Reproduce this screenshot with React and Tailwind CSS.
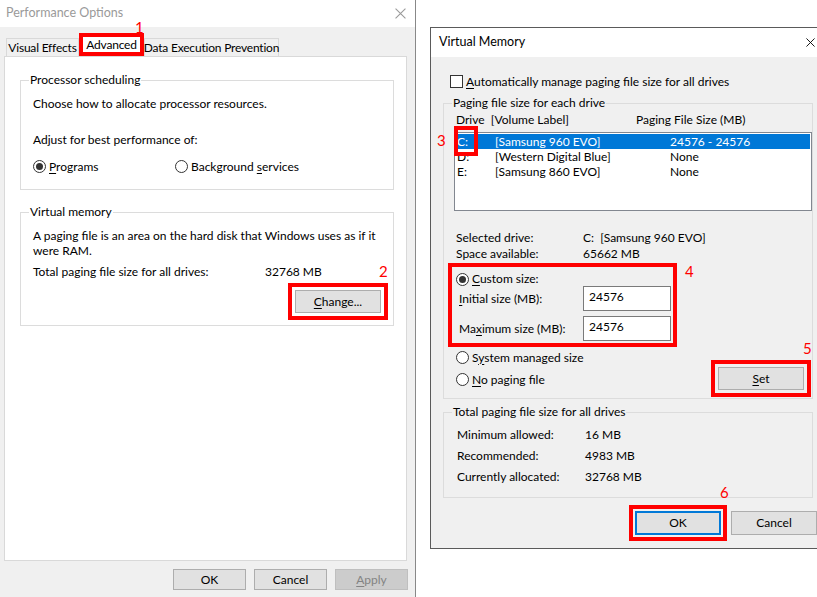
import React from 'react'

const U = ({ children }) => <span className="underline underline-offset-[2px]">{children}</span>

function Radio({ checked }) {
  return (
    <span className="flex h-[13px] w-[13px] shrink-0 items-center justify-center rounded-full border border-[#333] bg-white">
      {checked && <span className="h-[7px] w-[7px] rounded-full bg-[#333]" />}
    </span>
  )
}

function RedBox() {
  return <span className="pointer-events-none absolute -inset-[8px] border-4 border-[#ff0000]" />
}

function Mark({ n, className }) {
  return <span className={`absolute text-[15px] leading-[15px] text-[#ff0000] ${className}`}>{n}</span>
}

function Group({ title, bg, className, children }) {
  return (
    <div className={`relative border border-[#dcdcdc] ${className}`}>
      <span className={`absolute -top-[9px] left-[8px] px-[1px] leading-[16px] ${bg}`}>{title}</span>
      {children}
    </div>
  )
}

function CloseX({ color, size }) {
  return (
    <svg width={size} height={size} viewBox="0 0 10 10" className="shrink-0">
      <path d="M0.5 0.5 L9.5 9.5 M9.5 0.5 L0.5 9.5" stroke={color} strokeWidth="1" fill="none" />
    </svg>
  )
}

function PerformanceOptions() {
  return (
    <div className="flex h-full w-[416px] shrink-0 flex-col border-r border-[#888] bg-[#f0f0f0]">
      <div className="flex h-[27px] items-center justify-between bg-white pl-[6px] pr-[9px] text-[#9a9a9a]">
        <span className="text-[12.5px]">Performance Options</span>
        <CloseX color="#9a9a9a" size={11} />
      </div>

      {/* tabs */}
      <div className="flex h-[29px] items-end whitespace-nowrap pl-[6px] tracking-[-0.2px]">
        <div className="flex h-[18px] w-[73px] items-center justify-center border border-b-0 border-[#d9d9d9]">
          Visual Effects
        </div>
        <div className="relative flex h-[23px] w-[65px] items-center justify-center border-4 border-[#ff0000] bg-white">
          Advanced
          <Mark n="1" className="left-[52px] -top-[17px]" />
        </div>
        <div className="flex h-[18px] w-[135px] items-center justify-center border border-b-0 border-[#d9d9d9]">
          Data Execution Prevention
        </div>
      </div>

      <div className="ml-[4px] h-[505px] w-[403px] border border-[#d9d9d9] bg-white px-[15px] pt-[23px]">
        <Group title="Processor scheduling" bg="bg-white" className="w-[374px] pb-[15px] pl-[12px] pt-[15px]">
          <div className="leading-[15px]">Choose how to allocate processor resources.</div>
          <div className="mt-[21px] leading-[15px]">Adjust for best performance of:</div>
          <div className="mt-[12px] flex h-[15px] items-center">
            <div className="flex w-[142px] items-center gap-[3px]">
              <Radio checked />
              <span><U>P</U>rograms</span>
            </div>
            <div className="flex items-center gap-[3px]">
              <Radio />
              <span>Background <U>s</U>ervices</span>
            </div>
          </div>
        </Group>

        <Group title="Virtual memory" bg="bg-white" className="mt-[22px] w-[374px] pb-[12px] pl-[12px] pr-[12px] pt-[15px]">
          <div className="leading-[15px]">
            A paging file is an area on the hard disk that Windows uses as if it
            <br />
            were RAM.
          </div>
          <div className="mt-[6px] flex leading-[15px]">
            <span className="w-[232px]">Total paging file size for all drives:</span>
            <span>32768 MB</span>
          </div>
          <div className="mt-[11px] flex justify-end">
            <div className="relative flex h-[23px] w-[86px] items-center justify-center border border-[#adadad] bg-[#e1e1e1]">
              <span><U>C</U>hange...</span>
              <RedBox />
              <Mark n="2" className="left-[83px] -top-[27px]" />
            </div>
          </div>
        </Group>
      </div>

      <div className="mt-[8px] flex justify-end gap-[8px] pr-[7px]">
        <div className="flex h-[21px] w-[73px] items-center justify-center border border-[#adadad] bg-[#e1e1e1]">OK</div>
        <div className="flex h-[21px] w-[73px] items-center justify-center border border-[#adadad] bg-[#e1e1e1]">Cancel</div>
        <div className="flex h-[21px] w-[73px] items-center justify-center border border-[#bfbfbf] bg-[#cccccc] text-[#838383]">
          <span><U>A</U>pply</span>
        </div>
      </div>
    </div>
  )
}

const drives = [
  { d: 'C:', label: '[Samsung 960 EVO]', size: '24576 - 24576', selected: true },
  { d: 'D:', label: '[Western Digital Blue]', size: 'None' },
  { d: 'E:', label: '[Samsung 860 EVO]', size: 'None' },
]

function VirtualMemory() {
  return (
    <div className="ml-[14px] mt-[27px] flex h-[522px] w-[398px] shrink-0 flex-col border border-[#5a5a5a]">
      <div className="flex h-[29px] shrink-0 items-center justify-between bg-white pl-[8px] pr-[12px]">
        <span className="text-[12.5px]">Virtual Memory</span>
        <CloseX color="#000" size={9} />
      </div>

      <div className="flex-1 bg-[#f0f0f0] pl-[12px]">
        <div className="ml-[7px] mt-[18px] flex h-[13px] items-center gap-[3px]">
          <span className="h-[13px] w-[13px] border border-[#333] bg-white" />
          <span><U>A</U>utomatically manage paging file size for all drives</span>
        </div>

        <Group title="Paging file size for each drive" bg="bg-[#f0f0f0]" className="mt-[15px] w-[370px] pb-[8px] pl-[10px] pt-[8px]">
          <div className="ml-[2px] flex h-[16px] items-center">
            <span className="w-[180px]">Drive&nbsp; [Volume Label]</span>
            <span>Paging File Size (MB)</span>
          </div>

          <div className="relative mt-[4px] h-[79px] w-[358px] border border-[#828790] bg-white p-px">
            {drives.map((r) => (
              <div
                key={r.d}
                className={`flex h-[15px] items-center pl-[1px] ${r.selected ? 'bg-[#0078d7] text-white' : ''}`}
              >
                <span className="w-[38px]">{r.d}</span>
                <span className="w-[175px]">{r.label}</span>
                <span>{r.size}</span>
              </div>
            ))}
            <span className="pointer-events-none absolute -left-px -top-[7px] h-[30px] w-[24px] border-4 border-[#ff0000]" />
            <Mark n="3" className="-left-[18px] top-0" />
          </div>

          <div className="ml-[2px] mt-[19px] leading-[16px]">
            <div className="flex">
              <span className="w-[127px]">Selected drive:</span>
              <span>C:&nbsp; [Samsung 960 EVO]</span>
            </div>
            <div className="flex">
              <span className="w-[127px]">Space available:</span>
              <span>65662 MB</span>
            </div>
          </div>

          <div className="relative mt-[10px]">
            <div className="ml-[2px] flex h-[14px] items-center gap-[3px]">
              <Radio checked />
              <span><U>C</U>ustom size:</span>
            </div>
            <div className="flex h-[25px] items-center">
              <span className="ml-[5px] w-[124px]"><U>I</U>nitial size (MB):</span>
              <div className="flex h-[25px] w-[88px] items-center border border-[#7a7a7a] bg-white pb-[3px] pl-[5px]">24576</div>
            </div>
            <div className="mt-[5px] flex h-[25px] items-center">
              <span className="ml-[5px] w-[124px]">Ma<U>x</U>imum size (MB):</span>
              <div className="flex h-[25px] w-[88px] items-center border border-[#7a7a7a] bg-white pb-[3px] pl-[5px]">24576</div>
            </div>
            <span className="pointer-events-none absolute -left-[6px] -top-[9px] h-[84px] w-[229px] border-4 border-[#ff0000]" />
            <Mark n="4" className="left-[231px] -top-[8px]" />
          </div>

          <div className="mt-[9px] flex items-end justify-between pr-[8px]">
            <div className="mb-[3px] ml-[2px]">
              <div className="flex h-[15px] items-center gap-[3px]">
                <Radio />
                <span>S<U>y</U>stem managed size</span>
              </div>
              <div className="mt-[7px] flex h-[15px] items-center gap-[3px]">
                <Radio />
                <span><U>N</U>o paging file</span>
              </div>
            </div>
            <div className="relative flex h-[23px] w-[86px] items-center justify-center border border-[#adadad] bg-[#e1e1e1]">
              <span><U>S</U>et</span>
              <RedBox />
              <Mark n="5" className="left-[84px] -top-[27px]" />
            </div>
          </div>
        </Group>

        <Group title="Total paging file size for all drives" bg="bg-[#f0f0f0]" className="mt-[13px] w-[370px] pb-[10px] pl-[13px] pt-[11px]">
          <div className="leading-[21px]">
            <div className="flex">
              <span className="w-[128px]">Minimum allowed:</span>
              <span>16 MB</span>
            </div>
            <div className="flex">
              <span className="w-[128px]">Recommended:</span>
              <span>4983 MB</span>
            </div>
            <div className="flex">
              <span className="w-[128px]">Currently allocated:</span>
              <span>32768 MB</span>
            </div>
          </div>
        </Group>

        <div className="ml-[192px] mt-[13px] flex gap-[10px]">
          <div className="relative flex h-[24px] w-[86px] items-center justify-center border-2 border-[#0078d7] bg-[#e1e1e1]">
            OK
            <RedBox />
            <Mark n="6" className="left-[83px] -top-[28px]" />
          </div>
          <div className="flex h-[24px] w-[86px] items-center justify-center border border-[#adadad] bg-[#e1e1e1]">Cancel</div>
        </div>
      </div>
    </div>
  )
}

export default function App() {
  return (
    <div className="flex h-[597px] w-[817px] items-start overflow-hidden bg-white font-['Lato',sans-serif] text-[12px] text-black">
      <PerformanceOptions />
      <VirtualMemory />
    </div>
  )
}
